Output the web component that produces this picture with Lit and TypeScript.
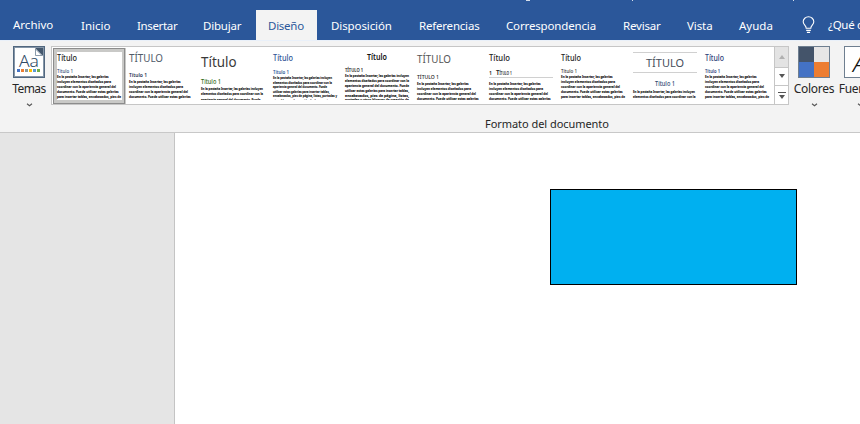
import { LitElement, html, svg, css } from "lit";
import { customElement } from "lit/decorators.js";
import { styleMap } from "lit/directives/style-map.js";

interface Tab { label: string; width: number; spacing: number; active?: boolean }
const TABS: Tab[] = [
  { label: "Archivo", width: 68, spacing: 0 },
  { label: "Inicio", width: 56, spacing: 0 },
  { label: "Insertar", width: 66, spacing: -0.35 },
  { label: "Dibujar", width: 66, spacing: -0.2 },
  { label: "Diseño", width: 61, spacing: -0.25, active: true },
  { label: "Disposición", width: 89, spacing: -0.1 },
  { label: "Referencias", width: 87, spacing: -0.2 },
  { label: "Correspondencia", width: 117, spacing: -0.15 },
  { label: "Revisar", width: 64, spacing: -0.2 },
  { label: "Vista", width: 52, spacing: -0.1 },
  { label: "Ayuda", width: 64, spacing: 0 },
];

// x, baseline, width, font size, colour, text, weight
type Run = [number, number, number, number, string, string, number?];
interface Thumb { runs: Run[]; body: string[]; widths: number[]; top: number; pitch: number; rules?: number[]; selected?: boolean }

const NARROW = [
  "En la pestaña Insertar, las galerías",
  "incluyen elementos diseñados para",
  "coordinar con la apariencia general del",
  "documento. Puede utilizar estas galerías",
  "para insertar tablas, encabezados, pies de",
  "página, listas, portadas y otros bloques",
];
const WIDE = [
  "En la pestaña Insertar, las galerías incluyen",
  "elementos diseñados para coordinar con la",
  "apariencia general del documento. Puede",
  "utilizar estas galerías para insertar tablas,",
  "encabezados, pies de página, listas, portadas y",
  "otros bloques de creación de documentos",
];
const NARROW_WIDTHS = [51.5, 54, 59, 61.5, 64, 62];

const THUMBS: Thumb[] = [
  { selected: true, runs: [[4, 61, 20, 8.6, "#222", "Título", 500], [4, 73, 16, 5.6, "#2f4a75", "Título 1", 500]], body: NARROW.slice(0, 5), widths: NARROW_WIDTHS, top: 78, pitch: 5 },
  { runs: [[4, 62, 34, 11, "#505a68", "TÍTULO"], [4, 77, 18, 5.6, "#1f3050", "Título 1", 600]], body: NARROW.slice(0, 4), widths: NARROW_WIDTHS, top: 83.3, pitch: 5 },
  { runs: [[4, 67, 35.5, 14, "#3a3a3a", "Título"], [4, 84, 20, 6.4, "#2f6a10", "Título 1", 500]], body: WIDE.slice(0, 3), widths: [62, 62, 59.5], top: 90.3, pitch: 5.1 },
  { runs: [[4, 61, 20, 8.6, "#2f5496", "Título", 500], [4, 74, 16, 5.6, "#2f5496", "Título 1", 600]], body: WIDE, widths: [59, 59, 54, 56.5, 64, 58], top: 79, pitch: 4.6 },
  { runs: [[26, 59.5, 20, 8, "#111", "Título", 600], [4, 72, 18, 5.2, "#111", "TÍTULO 1", 600]], body: [...WIDE.slice(0, 4), "encabezados, pies de página, listas,", "portadas y otros bloques de creación de"], widths: [64, 64, 64, 64, 64, 64], top: 77.4, pitch: 4.8 },
  { runs: [[4, 63, 34, 11.4, "#555", "TÍTULO"], [4, 79, 22, 6, "#222", "TÍTULO 1", 500]], body: NARROW.slice(0, 4), widths: NARROW_WIDTHS, top: 85.3, pitch: 5 },
  { runs: [[4, 61, 21, 8.6, "#222", "Título", 500], [4, 75, 3, 6, "#222", "1", 600], [11, 75, 3.6, 6.2, "#222", "T", 600], [14.4, 75, 12.4, 5, "#222", "ÍTULO 1", 600]], body: NARROW.slice(0, 4), widths: NARROW_WIDTHS, top: 84.6, pitch: 5, rules: [77.5] },
  { runs: [[4, 61, 20, 8.6, "#222", "Título", 500], [4, 72.5, 16, 5.4, "#333", "Título 1", 500]], body: NARROW.slice(0, 5), widths: NARROW_WIDTHS, top: 78, pitch: 5 },
  { runs: [[17, 66.5, 38, 11.4, "#444c5a", "TÍTULO"], [26, 86, 20, 6.2, "#2c4a70", "Título 1", 500]], body: WIDE.slice(0, 2), widths: [62, 62.5], top: 92.5, pitch: 5.2, rules: [52.5, 72.5] },
  { runs: [[4, 60.5, 19, 8.4, "#2b4078", "Título", 500], [4, 73, 15, 5.4, "#2b4078", "Título 1", 600]], body: NARROW, widths: NARROW_WIDTHS, top: 78, pitch: 5 },
];

@customElement("style-thumb")
class StyleThumb extends LitElement {
  static properties = { thumb: { attribute: false } };
  declare thumb: Thumb;
  static styles = css`
    :host { display: block; width: 72px; height: 57px; }
    svg { display: block; font-family: "Noto Sans", sans-serif; }
    .body { font-size: 4px; font-weight: 700; fill: #111; stroke: #111; stroke-width: .12; }
    .frame { fill: #fff; stroke: #c9c9c7; stroke-width: 4; }
    .edge { fill: none; stroke: #8c8c8c; }
    .rule { stroke: #d0d0d0; }
  `;
  render() {
    const t = this.thumb;
    return html`<svg width="72" height="53" viewBox="0 47 72 53" overflow=${t.selected ? "visible" : "hidden"}>
      ${t.selected ? svg`<rect class="frame" x="2" y="50" width="69" height="52"/><rect class="edge" x=".5" y="48.5" width="71" height="55"/>` : ""}
      ${(t.rules ?? []).map((y) => svg`<line class="rule" x1="4" x2="68" y1=${y} y2=${y}/>`)}
      ${t.runs.map(([x, y, w, size, color, text, weight]) => svg`<text x=${x} y=${y} font-size=${size} fill=${color} font-weight=${weight ?? 400} textLength=${w} lengthAdjust="spacingAndGlyphs">${text}</text>`)}
      ${t.body.map((line, i) => svg`<text class="body" x="4" y=${t.top + i * t.pitch} textLength=${t.widths[i]} lengthAdjust="spacingAndGlyphs">${line}</text>`)}
    </svg>`;
  }
}

@customElement("app-root")
class AppRoot extends LitElement {
  static styles = css`
    :host { display: flex; flex-direction: column; width: 860px; height: 424px; overflow: hidden; background: #fff; font-family: "Noto Sans", "Open Sans", sans-serif; color: #262626; }
    .header { position: relative; display: flex; height: 40px; flex: none; padding-top: 10px; box-sizing: border-box; background: #2b579a; overflow: hidden; }
    .dot { position: absolute; top: 0; height: 1px; background: #d5deeb; }
    .d1 { left: 526px; width: 4px; }
    .d2 { left: 632px; width: 1px; }
    .d3 { left: 793px; width: 1px; }
    .tab { flex: none; box-sizing: border-box; height: 30px; padding-left: 13px; line-height: 31px; font-size: 11.5px; color: #fff; white-space: nowrap; }
    .tab:first-of-type { line-height: 30px; }
    .tab.active { background: #f3f3f3; color: #2b579a; padding-left: 12px; }
    .tab.active + .tab { padding-left: 14px; }
    .bulb { flex: none; margin: 6px 0 0 12px; }
    .ask { flex: none; margin-left: 13px; line-height: 30px; font-size: 11.5px; letter-spacing: -.3px; color: #fff; white-space: nowrap; }
    .ribbon { display: flex; flex-direction: column; flex: none; height: 93px; box-sizing: border-box; background: #f3f3f3; border-top: 1px solid #e9f0f9; border-bottom: 1px solid #c8c8c8; }
    .row { display: flex; height: 74px; padding-top: 5px; box-sizing: border-box; }
    .command { display: flex; flex-direction: column; align-items: center; flex: none; width: 40px; font-size: 12px; line-height: 16px; letter-spacing: -.3px; white-space: nowrap; }
    .command svg { display: block; flex: none; letter-spacing: 0; }
    .command span { margin-top: 3px; }
    .themes { margin-left: 9px; }
    .themes span { letter-spacing: -.6px; }
    .colors { margin-left: 5px; }
    .fonts { margin-left: 6px; }
    .command .chev { margin-top: 6px; }
    .gallery { display: flex; flex: none; margin-left: 2px; width: 738px; height: 59px; box-sizing: border-box; border: 1px solid #c6c6c6; background: #fff; padding-left: 1px; }
    .scroll { display: flex; flex-direction: column; width: 15px; margin-left: 1px; margin-right: -1px; }
    .step { display: grid; place-items: center; box-sizing: border-box; height: 19px; border-left: 1px solid #c6c6c6; border-top: 1px solid #c6c6c6; border-right: 1px solid #c6c6c6; }
    .step svg { display: block; }
    .step.off { height: 20px; border-top: 0; background: #e3e3e3; }
    .caption { font-size: 11px; line-height: 16px; margin-top: 1px; padding-left: 485px; letter-spacing: -.05px; white-space: nowrap; }
    .canvas { display: flex; flex: 1; background: #e5e5e5; }
    .page { flex: 1; margin-left: 174px; border-left: 1px solid #c4c4c4; background: #fff; }
    .shape { box-sizing: border-box; width: 247px; height: 96px; margin: 56px 0 0 375px; background: #00b0f0; border: 1px solid #000; }
  `;

  private chevron() {
    return html`<svg class="chev" width="7" height="4" viewBox="0 0 7 4" fill="none" stroke="#555" stroke-width="1.1"><path d="M1 .7 3.5 2.7 6 .7"/></svg>`;
  }

  render() {
    return html`
      <div class="header">
        ${TABS.map((t) => html`<div class="tab ${t.active ? "active" : ""}" style=${styleMap({ width: `${t.width}px`, letterSpacing: `${t.spacing}px` })}>${t.label}</div>`)}
        <svg class="bulb" width="13" height="18" viewBox="0 0 13 18" fill="none" stroke="#fff" stroke-width="1.1"><path d="M4.2 12.2C4.2 9.5 1.2 8.8 1.2 5.8a5.3 5 0 0 1 10.6 0c0 3-3 3.7-3 6.4zM4.2 14.4h4.6M4.9 16.4h3.2"/></svg>
        <div class="ask">¿Qué desea hacer?</div>
        <i class="dot d1"></i><i class="dot d2"></i><i class="dot d3"></i>
      </div>
      <div class="ribbon">
        <div class="row">
          <div class="command themes">
            <svg width="32" height="32" viewBox="0 0 32 32">
              <rect x=".5" y=".5" width="31" height="31" fill="#fff" stroke="#51677f"/>
              <rect x="1.500" y="1.500" width="29" height="29" fill="none" stroke="#8596a8"/>
              <path d="M22 2h8v8z" fill="#44586e"/>
              <path d="M22.500 3v6.500H29z" fill="#fff" stroke="#6d8196" stroke-width=".8"/>
              <text x="6" y="21" font-size="16.5" font-weight="300" textLength="20" lengthAdjust="spacingAndGlyphs" fill="#2f4a66">Aa</text>
              ${["#4472c4", "#ed7d31", "#8a9a9a", "#ffc000", "#5b9bd5", "#70ad47"].map((c, i) => svg`<rect x=${4 + i * 4} y="23" width="3" height="3" fill=${c}/>`)}
            </svg>
            <span>Temas</span>${this.chevron()}
          </div>
          <div class="gallery">
            ${THUMBS.map((t) => html`<style-thumb .thumb=${t}></style-thumb>`)}
            <div class="scroll">
              <div class="step off"><svg width="6" height="4"><path d="M0 4h6L3 0z" fill="#b0b0b0"/></svg></div>
              <div class="step"><svg width="6" height="4"><path d="M0 0h6L3 4z" fill="#555"/></svg></div>
              <div class="step"><svg width="8" height="7"><path d="M0 0h8v1H0zM1 3h6L4 7z" fill="#555"/></svg></div>
            </div>
          </div>
          <div class="command colors">
            <svg width="32" height="32"><path d="M0 0h32v32H0z" fill="#6f7f90"/><path d="M1 1h15v15H1z" fill="#44546a"/><path d="M16 1h15v15H16z" fill="#e7e6e6"/><path d="M1 16h15v15H1z" fill="#4472c4"/><path d="M16 16h15v15H16z" fill="#ed7d31"/></svg>
            <span>Colores</span>${this.chevron()}
          </div>
          <div class="command fonts">
            <svg width="32" height="32"><rect x=".5" y=".5" width="31" height="31" fill="#fff" stroke="#6f7f90"/><text x="9" y="26" font-size="24" font-style="italic" font-weight="300" fill="#111">A</text></svg>
            <span>Fuentes</span>${this.chevron()}
          </div>
        </div>
        <div class="caption">Formato del documento</div>
      </div>
      <div class="canvas"><div class="page"><div class="shape"></div></div></div>
    `;
  }
}
